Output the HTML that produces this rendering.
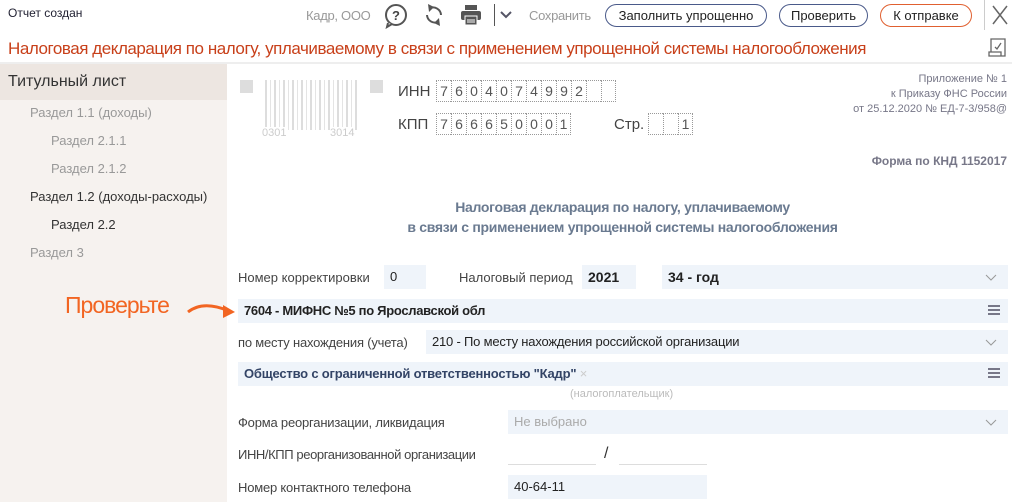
<!DOCTYPE html>
<html><head><meta charset="utf-8"><style>
*{box-sizing:border-box;margin:0;padding:0}
body{width:1012px;height:502px;overflow:hidden;background:#fff;font-family:"Liberation Sans",sans-serif;color:#333;position:relative;font-size:13px}
.a{position:absolute;white-space:nowrap}
.btn{position:absolute;top:4px;height:23px;border:1px solid #4a5a8a;border-radius:12px;font-size:13px;line-height:21px;text-align:center;color:#222}
.side{position:absolute;left:0;top:64px;width:227px;height:438px;background:#f6f2ef}
.fld{position:absolute;background:#eff4fa;height:24px;line-height:24px;font-size:13px;padding-left:6px;color:#222}
.lbl{position:absolute;font-size:13px;color:#444;white-space:nowrap}
.cells{display:flex}
.cells span{display:block;width:15px;height:22px;border:1px dotted #999;border-right:none;text-align:center;line-height:21px;font-size:14px;color:#555}
.cells span:last-child{border-right:1px dotted #999}
.chev{position:absolute;right:10px;top:0;width:14px;height:24px}
.menu{position:absolute;right:8px;top:6px;width:12px;height:10px;border-top:2px solid #778;border-bottom:2px solid #778}
.menu:after{content:"";position:absolute;left:0;right:0;top:2px;border-top:2px solid #778}
</style></head><body>
<div class="a" style="left:8px;top:6px;font-size:12px;color:#223">Отчет создан</div>
<div class="a" style="left:306px;top:8px;font-size:13px;color:#999;letter-spacing:-0.3px">Кадр, ООО</div>
<svg class="a" style="left:384px;top:3px" width="26" height="26"><circle cx="12" cy="12" r="10" stroke="#555" stroke-width="2" fill="none"/><path d="M4 20 L3 24 L8 21" stroke="#555" stroke-width="2" fill="#fff"/><text x="12" y="17" text-anchor="middle" font-size="13" font-weight="bold" fill="#444" font-family="Liberation Sans">?</text></svg>
<svg class="a" style="left:423px;top:2px" width="22" height="26"><path d="M7 6 A8 8 0 0 1 18 13 M15 20 A8 8 0 0 1 4 13" stroke="#555" stroke-width="2" fill="none"/><path d="M5 2 L11 5 L6 10 Z M17 24 L11 21 L16 16 Z" fill="#555"/></svg>
<svg class="a" style="left:459px;top:4px" width="24" height="22"><rect x="6" y="1" width="12" height="5" fill="#555"/><rect x="2" y="7" width="20" height="9" rx="2" fill="#555"/><rect x="6" y="12" width="12" height="9" fill="#555" stroke="#fff" stroke-width="1"/><line x1="8" y1="16" x2="16" y2="16" stroke="#fff"/><line x1="8" y1="18" x2="16" y2="18" stroke="#fff"/></svg>
<div class="a" style="left:494px;top:4px;width:1px;height:22px;background:#555"></div>
<svg class="a" style="left:500px;top:10px" width="12" height="10"><path d="M1 2 L6 7 L11 2" stroke="#556" stroke-width="2" fill="none"/></svg>
<div class="a" style="left:529px;top:8px;font-size:13px;color:#999;letter-spacing:-0.3px">Сохранить</div>
<div class="btn" style="left:605px;width:162px">Заполнить упрощенно</div>
<div class="btn" style="left:779px;width:89px">Проверить</div>
<div class="btn" style="left:880px;width:92px;border-color:#e06030">К отправке</div>
<div class="a" style="left:984px;top:0;width:28px;height:30px;border-left:1px solid #ccc"></div>
<svg class="a" style="left:992px;top:5px" width="16" height="20"><path d="M1 1 L15 19 M15 1 L1 19" stroke="#666" stroke-width="1.5"/></svg>
<div class="a" style="left:8px;top:39px;font-size:17px;color:#c8401a;letter-spacing:-0.45px">Налоговая декларация по налогу, уплачиваемому в связи с применением упрощенной системы налогообложения</div>
<svg class="a" style="left:986px;top:36px" width="22" height="24"><path d="M5 3 H19 V20 H3 V16 H5 Z M3 16 H15 V20" stroke="#666" stroke-width="1.3" fill="none"/><path d="M9 11 L11 13 L15 7" stroke="#666" stroke-width="1.3" fill="none"/></svg>
<div class="a" style="left:0;top:62px;width:1012px;height:2px;background:#eee"></div>
<div class="side">
<div style="background:#ede6e1;height:36px;line-height:36px;padding-left:8px;font-size:16px;color:#333">Титульный лист</div>
<div class="a" style="left:30px;top:41px;color:#999">Раздел 1.1 (доходы)</div>
<div class="a" style="left:51px;top:69px;color:#999">Раздел 2.1.1</div>
<div class="a" style="left:51px;top:97px;color:#999">Раздел 2.1.2</div>
<div class="a" style="left:30px;top:125px;color:#333">Раздел 1.2 (доходы-расходы)</div>
<div class="a" style="left:51px;top:153px;color:#333">Раздел 2.2</div>
<div class="a" style="left:30px;top:181px;color:#999">Раздел 3</div>
</div>
<div class="a" style="left:240px;top:80px;width:13px;height:13px;background:#ddd"></div>
<div class="a" style="left:370px;top:80px;width:13px;height:13px;background:#ddd"></div>
<div class="a" style="left:265px;top:80px;width:95px;height:50px;background:repeating-linear-gradient(90deg,#ddd 0 2px,#fff 2px 5px,#e4e4e4 5px 6px,#fff 6px 9px)"></div>
<div class="a" style="left:262px;top:127px;font-size:11px;color:#ccc;background:#fff">0301</div>
<div class="a" style="left:330px;top:127px;font-size:11px;color:#ccc;background:#fff">3014</div>
<div class="a" style="left:398px;top:83px;font-size:15px;color:#444">ИНН</div>
<div class="a cells" style="left:436px;top:80px"><span>7</span><span>6</span><span>0</span><span>4</span><span>0</span><span>7</span><span>4</span><span>9</span><span>9</span><span>2</span><span></span><span></span></div>
<div class="a" style="left:398px;top:116px;font-size:15px;color:#444">КПП</div>
<div class="a cells" style="left:436px;top:113px"><span>7</span><span>6</span><span>6</span><span>6</span><span>5</span><span>0</span><span>0</span><span>0</span><span>1</span></div>
<div class="a" style="left:614px;top:116px;font-size:15px;color:#444">Стр.</div>
<div class="a cells" style="left:648px;top:113px"><span></span><span></span><span>1</span></div>
<div class="a" style="right:5px;top:72px;font-size:11px;color:#778;text-align:right;line-height:15px">Приложение № 1<br>к Приказу ФНС России<br>от 25.12.2020 № ЕД-7-3/958@</div>
<div class="a" style="right:5px;top:154px;font-size:12px;color:#778;font-weight:bold">Форма по КНД 1152017</div>
<div class="a" style="left:380px;top:197px;width:485px;text-align:center;font-size:14px;color:#6a7a90;font-weight:bold;line-height:20px;letter-spacing:-0.3px">Налоговая декларация по налогу, уплачиваемому<br>в связи с применением упрощенной системы налогообложения</div>
<div class="lbl" style="left:238px;top:270px">Номер корректировки</div>
<div class="fld" style="left:384px;top:265px;width:42px">0</div>
<div class="lbl" style="left:459px;top:270px">Налоговый период</div>
<div class="fld" style="left:582px;top:265px;width:54px;font-weight:bold;font-size:14px">2021</div>
<div class="fld" style="left:662px;top:265px;width:346px;font-weight:bold;font-size:14px">34 - год<svg class="chev"><path d="M2 10 L7 15 L12 10" stroke="#999" fill="none"/></svg></div>
<div class="a" style="left:65px;top:292px;font-size:23px;color:#f26522;letter-spacing:-1px">Проверьте</div>
<svg class="a" style="left:185px;top:298px" width="55" height="22"><path d="M3 14 Q18 2 44 13" stroke="#f26522" stroke-width="3" fill="none"/><path d="M38 7 L50 14 L38 20 Z" fill="#f26522"/></svg>
<div class="fld" style="left:238px;top:299px;width:770px;font-weight:bold;letter-spacing:-0.3px">7604 - МИФНС №5 по Ярославской обл<span class="menu"></span></div>
<div class="lbl" style="left:238px;top:335px;letter-spacing:-0.2px">по месту нахождения (учета)</div>
<div class="fld" style="left:426px;top:330px;width:582px;letter-spacing:-0.2px">210 - По месту нахождения российской организации<svg class="chev"><path d="M2 10 L7 15 L12 10" stroke="#999" fill="none"/></svg></div>
<div class="fld" style="left:238px;top:362px;width:770px;font-weight:bold;color:#334466;letter-spacing:-0.2px">Общество с ограниченной ответственностью "Кадр" <span style="color:#ccc;font-weight:normal">×</span><span class="menu"></span></div>
<div class="a" style="left:570px;top:388px;font-size:11px;color:#bbb">(налогоплательщик)</div>
<div class="lbl" style="left:238px;top:415px;letter-spacing:-0.2px">Форма реорганизации, ликвидация</div>
<div class="fld" style="left:508px;top:410px;width:500px;color:#aaa">Не выбрано<svg class="chev"><path d="M2 10 L7 15 L12 10" stroke="#999" fill="none"/></svg></div>
<div class="lbl" style="left:238px;top:447px;letter-spacing:-0.4px">ИНН/КПП реорганизованной организации</div>
<div class="a" style="left:508px;top:464px;width:88px;border-bottom:1px solid #ddd"></div>
<div class="a" style="left:604px;top:445px;font-size:16px">/</div>
<div class="a" style="left:619px;top:464px;width:88px;border-bottom:1px solid #ddd"></div>
<div class="lbl" style="left:238px;top:480px;letter-spacing:-0.2px">Номер контактного телефона</div>
<div class="fld" style="left:508px;top:475px;width:199px">40-64-11</div>
</body></html>
